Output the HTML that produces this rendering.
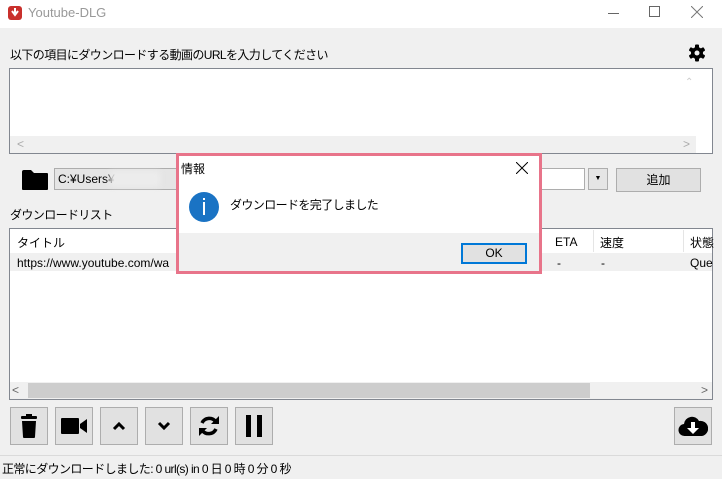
<!DOCTYPE html>
<html><head><meta charset="utf-8"><style>
*{box-sizing:border-box;margin:0;padding:0}
body{width:722px;height:479px;overflow:hidden;background:#f0f0f0;font-family:"Liberation Sans","Noto Sans CJK JP",sans-serif;font-size:12px;color:#000;position:relative}
.a{position:absolute}
.j{letter-spacing:-0.6px}
.btn{position:absolute;top:407px;width:38px;height:38px;background:#e1e1e1;border:1px solid #adadad;display:flex;align-items:center;justify-content:center}
</style></head><body>
<div class="a" style="left:0;top:0;width:722px;height:28px;background:#fff"></div>
<div class="a" style="left:8px;top:6px;width:14px;height:14px;background:#c9302c;border-radius:3px"></div>
<svg class="a" style="left:11px;top:8px" width="8" height="9"><path d="M4 0v5M1 3l3 4 3-4" stroke="#fff" stroke-width="2" fill="none"/></svg>
<div class="a" style="left:28px;top:5px;font-size:13px;color:#999">Youtube-DLG</div>
<div class="a" style="left:608px;top:13px;width:11px;height:1px;background:#666"></div>
<div class="a" style="left:649px;top:6px;width:11px;height:11px;border:1px solid #666"></div>
<svg class="a" style="left:691px;top:6px" width="12" height="12"><path d="M0 0L12 12M12 0L0 12" stroke="#777"/></svg>

<div class="a j" style="left:10px;top:46px">以下の項目にダウンロードする動画のURLを入力してください</div>
<svg class="a" style="left:688px;top:44px" width="18" height="18" viewBox="0 0 18 18"><g fill="#000"><circle cx="9" cy="9" r="6"/><rect x="7" y="0.5" width="4" height="17" rx="1"/><rect x="7" y="0.5" width="4" height="17" rx="1" transform="rotate(60 9 9)"/><rect x="7" y="0.5" width="4" height="17" rx="1" transform="rotate(120 9 9)"/></g><circle cx="9" cy="9" r="2.5" fill="#f0f0f0"/></svg>

<div class="a" style="left:9px;top:68px;width:704px;height:86px;background:#fff;border:1px solid #828790"></div>
<div class="a" style="left:10px;top:136px;width:686px;height:17px;background:#f0f0f0"></div>
<div class="a" style="left:17px;top:137px;color:#aaa">&lt;</div>
<div class="a" style="left:683px;top:137px;color:#aaa">&gt;</div>
<div class="a" style="left:685px;top:77px;color:#ccc;font-size:10px">⌃</div>

<svg class="a" style="left:21px;top:169px" width="28" height="22"><path d="M1 3q0-2 2-2h7l3 3h13q1 0 1 1v15q0 1-1 1H2q-1 0-1-1z" fill="#000"/></svg>
<div class="a" style="left:54px;top:168px;width:531px;height:22px;background:#fff;border:1px solid #adadad"></div>
<div class="a" style="left:55px;top:169px;width:122px;height:20px;background:#e5e5e5"></div>
<div class="a" style="left:58px;top:172px">C:¥Users¥</div>
<div class="a" style="left:110px;top:171px;width:50px;height:16px;background:#ececec;filter:blur(3px)"></div>
<div class="a" style="left:588px;top:168px;width:20px;height:22px;background:#e5e5e5;border:1px solid #adadad;font-size:7px;text-align:center;line-height:20px">▼</div>
<div class="a" style="left:616px;top:168px;width:85px;height:24px;background:#e1e1e1;border:1px solid #adadad;text-align:center;line-height:22px">追加</div>

<div class="a j" style="left:10px;top:206px">ダウンロードリスト</div>
<div class="a" style="left:9px;top:228px;width:704px;height:172px;background:#fff;border:1px solid #828790"></div>
<div class="a" style="left:17px;top:234px">タイトル</div>
<div class="a" style="left:10px;top:253px;width:702px;height:18px;background:#f0f0f0"></div>
<div class="a" style="left:17px;top:256px">https://www.youtube.com/wa</div>
<div class="a" style="left:593px;top:230px;width:1px;height:22px;background:#e5e5e5"></div>
<div class="a" style="left:683px;top:230px;width:1px;height:22px;background:#e5e5e5"></div>
<div class="a" style="left:555px;top:235px">ETA</div>
<div class="a" style="left:600px;top:234px">速度</div>
<div class="a" style="left:690px;top:234px">状態</div>
<div class="a" style="left:557px;top:256px">-</div>
<div class="a" style="left:601px;top:256px">-</div>
<div class="a" style="left:690px;top:256px">Que</div>
<div class="a" style="left:10px;top:382px;width:702px;height:17px;background:#f0f0f0"></div>
<div class="a" style="left:28px;top:383px;width:562px;height:15px;background:#cdcdcd"></div>
<div class="a" style="left:12px;top:383px;color:#666">&lt;</div>
<div class="a" style="left:701px;top:383px;color:#666">&gt;</div>

<div class="btn" style="left:10px"><svg width="16" height="24"><rect x="0" y="2" width="16" height="3" rx="1"/><rect x="5" y="0" width="6" height="3"/><path d="M1 7h14l-1 16q0 1-1 1H3q-1 0-1-1z"/></svg></div>
<div class="btn" style="left:55px"><svg width="26" height="16"><rect x="0" y="0" width="18" height="16" rx="1"/><path d="M19 6l7-5v14l-7-5z"/></svg></div>
<div class="btn" style="left:100px"><svg width="14" height="10"><path d="M2 8l5-5 5 5" stroke="#000" stroke-width="3" fill="none"/></svg></div>
<div class="btn" style="left:145px"><svg width="14" height="10"><path d="M2 2l5 5 5-5" stroke="#000" stroke-width="3" fill="none"/></svg></div>
<div class="btn" style="left:190px"><svg width="24" height="24" viewBox="0 0 24 24"><path d="M19 8A8 8 0 0 0 5 9" stroke="#000" stroke-width="3.5" fill="none"/><path d="M22 2v8h-8z"/><path d="M5 16A8 8 0 0 0 19 15" stroke="#000" stroke-width="3.5" fill="none"/><path d="M2 22v-8h8z"/></svg></div>
<div class="btn" style="left:235px"><svg width="16" height="22"><rect x="0" y="0" width="5" height="22"/><rect x="11" y="0" width="5" height="22"/></svg></div>
<div class="btn" style="left:674px"><svg width="30" height="22" viewBox="0 0 30 22"><path d="M7 21a6 6 0 0 1-1-12 8 8 0 0 1 15-3 7 7 0 0 1 3 15z"/><path d="M13 7h4v6h4l-6 6-6-6h4z" fill="#fff"/></svg></div>

<div class="a" style="left:0;top:455px;width:722px;height:1px;background:#dadada"></div>
<div class="a j" style="left:2px;top:460px">正常にダウンロードしました: 0 url(s) in 0 日 0 時 0 分 0 秒</div>

<div class="a" style="left:176px;top:153px;width:366px;height:121px;border:3px solid #e8748a;background:#fff"></div>
<div class="a" style="left:179px;top:233px;width:360px;height:38px;background:#f0f0f0"></div>
<div class="a" style="left:181px;top:160px">情報</div>
<svg class="a" style="left:516px;top:162px" width="12" height="12"><path d="M0 0L12 12M12 0L0 12" stroke="#000"/></svg>
<div class="a" style="left:189px;top:192px;width:30px;height:30px;border-radius:50%;background:#1a73c4"></div>
<div class="a" style="left:203px;top:198px;width:2px;height:2px;background:#fff"></div>
<div class="a" style="left:203px;top:202px;width:2px;height:13px;background:#fff"></div>
<div class="a j" style="left:230px;top:196px">ダウンロードを完了しました</div>
<div class="a" style="left:461px;top:243px;width:66px;height:21px;background:#e1e1e1;border:2px solid #0078d7;text-align:center;line-height:17px">OK</div>
</body></html>
